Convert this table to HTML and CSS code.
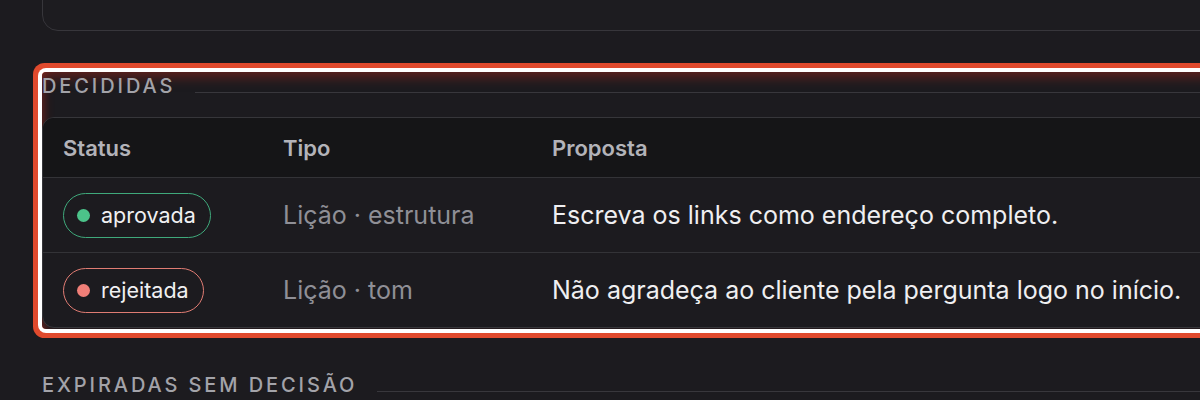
FILE: index.html
```html
<!DOCTYPE html>
<html lang="pt-BR">
  <head>
    <meta charset="UTF-8" />
    <meta name="viewport" content="width=device-width, initial-scale=1.0" />
    <title>Propostas</title>
    <link rel="stylesheet" href="styles.css">
  </head>
  <body>
    <div class="page">
      <!-- Card above, cut off by the viewport -->
      <div class="prev-card"></div>

      <section class="group highlighted">
        <div class="group-title">
          <span>Decididas</span>
          <div class="group-line"></div>
        </div>

        <div class="table">
          <div class="row head">
            <div class="cell">Status</div>
            <div class="cell">Tipo</div>
            <div class="cell">Proposta</div>
          </div>
          <div class="row">
            <div class="cell">
              <span class="badge approved"><span class="dot"></span>aprovada</span>
            </div>
            <div class="cell kind">Lição · estrutura</div>
            <div class="cell text">Escreva os links como endereço completo.</div>
          </div>
          <div class="row">
            <div class="cell">
              <span class="badge rejected"><span class="dot"></span>rejeitada</span>
            </div>
            <div class="cell kind">Lição · tom</div>
            <div class="cell text">Não agradeça ao cliente pela pergunta logo no início.</div>
          </div>
        </div>
      </section>

      <section class="group">
        <div class="group-title">
          <span>Expiradas sem decisão</span>
          <div class="group-line"></div>
        </div>
      </section>
    </div>
  </body>
</html>
```

FILE: styles.css
```css
body {
  font-family: Inter, 'Noto Sans', sans-serif;
  margin: 0;
  padding: 0;
  background-color: #1c1b1f;
  color: #ececee;
  overflow: hidden;
}

.page {
  padding-left: 42px;
  width: 1400px;
}

.prev-card {
  height: 60px;
  margin-top: -31px;
  border: 1px solid #37363b;
  border-radius: 16px;
  background-color: #1d1c20;
}

.group {
  margin-top: 41px;
}

.group + .group {
  margin-top: 42px;
}

.highlighted {
  border-radius: 4px;
  box-shadow: 0 0 0 4px #ffffff, 0 0 0 9px #e04a2d, inset 0 10px 12px -4px rgba(150, 40, 30, 0.5), inset 7px 0 10px -4px rgba(150, 40, 30, 0.45);
  padding-bottom: 1px;
}

.group-title {
  display: flex;
  align-items: center;
  gap: 20px;
  height: 28px;
  font-size: 20px;
  line-height: 28px;
  letter-spacing: 2.9px;
  text-transform: uppercase;
  color: #a3a3a9;
  font-weight: 500;
}

.group-line {
  flex: 1;
  height: 1px;
  background-color: #38373c;
  align-self: flex-end;
  margin-bottom: 7px;
}

.table {
  margin-top: 17px;
  border: 1px solid #36363a;
  border-radius: 12px;
  overflow: hidden;
  background-color: #1c1b1f;
}

.row {
  display: grid;
  grid-template-columns: 220px 269px 1fr;
  align-items: center;
  height: 74px;
  border-top: 1px solid #333337;
}

.row.head {
  height: 59px;
  border-top: none;
  background-color: #151517;
  font-size: 22px;
  font-weight: 600;
  color: #b3b3b9;
}

.cell {
  padding-left: 20px;
  white-space: nowrap;
}

.kind {
  font-size: 25px;
  color: #8f8f96;
}

.text {
  font-size: 25px;
  color: #efeff1;
}

.badge {
  display: inline-flex;
  align-items: center;
  gap: 11px;
  height: 43px;
  padding: 0 14px 0 13px;
  border-radius: 999px;
  border: 1.5px solid;
  font-size: 21.5px;
  color: #f0f0f2;
}

.dot {
  width: 13px;
  height: 13px;
  border-radius: 50%;
}

.badge.approved {
  border-color: #3fa97b;
}

.badge.approved .dot {
  background-color: #4cc38a;
}

.badge.rejected {
  border-color: #e07c73;
}

.badge.rejected .dot {
  background-color: #f07f78;
}
```
